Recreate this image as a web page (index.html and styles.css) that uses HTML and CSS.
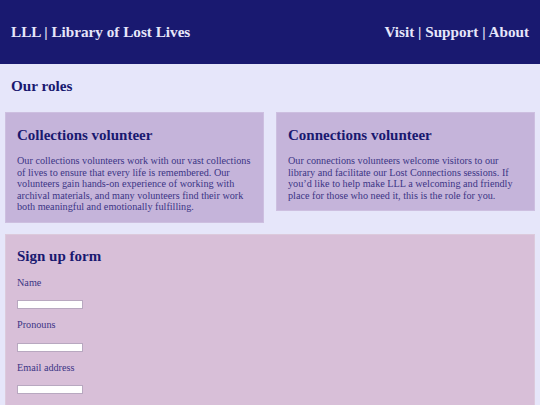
FILE: index.html
```html
<!DOCTYPE html>
<html lang="en">
<head>
<meta charset="utf-8">
<title>LLL | Volunteer</title>
<link rel="stylesheet" href="styles.css">
</head>
<body>
<header class="site-header">
  <div class="brand">LLL | Library of Lost Lives</div>
  <nav class="nav">Visit | Support | About</nav>
</header>
<main class="main">
  <h2 class="section-title">Our roles</h2>
  <div class="roles">
    <section class="card role">
      <h3 class="card-title">Collections volunteer</h3>
      <p class="card-text">Our collections volunteers work with our vast collections of lives to ensure that every life is remembered. Our volunteers gain hands-on experience of working with archival materials, and many volunteers find their work both meaningful and emotionally fulfilling.</p>
    </section>
    <section class="card role">
      <h3 class="card-title">Connections volunteer</h3>
      <p class="card-text">Our connections volunteers welcome visitors to our library and facilitate our Lost Connections sessions. If you’d like to help make LLL a welcoming and friendly place for those who need it, this is the role for you.</p>
    </section>
  </div>
  <section class="card form-card">
    <h3 class="card-title">Sign up form</h3>
    <form class="form">
      <div class="field">
        <label class="label" for="name">Name</label>
        <input class="input" id="name" type="text">
      </div>
      <div class="field">
        <label class="label" for="pronouns">Pronouns</label>
        <input class="input" id="pronouns" type="text">
      </div>
      <div class="field">
        <label class="label" for="email">Email address</label>
        <input class="input" id="email" type="email">
      </div>
    </form>
  </section>
</main>
</body>
</html>
```
FILE: styles.css
```css
* { box-sizing: border-box; }
html, body { margin: 0; padding: 0; }
body {
  background: #e6e6fa;
  color: #191970;
  font-family: "Liberation Serif", "Times New Roman", serif;
}
.site-header {
  height: 64px;
  background: #191970;
  color: #e6e6fa;
  display: flex;
  justify-content: space-between;
  align-items: center;
  padding: 0 11px;
  font-size: 15.2px;
  font-weight: bold;
}
.main {
  padding: 13px 5px 0;
}
.section-title {
  margin: 0 0 17px 6px;
  font-size: 15.2px;
  line-height: 18px;
}
.roles {
  display: flex;
  align-items: flex-start;
  gap: 12px;
}
.card {
  background: #c5b4da;
  border: 1px solid #cdbfe0;
  padding: 12px 11px 9px;
}
.role { flex: 1 1 0; }
.card-title {
  margin: 0 0 10px;
  font-size: 15px;
  line-height: 20px;
}
.card-text {
  margin: 0;
  font-size: 10.2px;
  line-height: 11.5px;
  color: #3b3585;
}
.form-card {
  margin-top: 11px;
  background: #d8bfd8;
  border-color: #dccadc;
  padding-top: 11px;
  padding-bottom: 20px;
}
.form { margin-top: 11px; }
.field { display: flex; flex-direction: column; align-items: flex-start; margin-bottom: 10px; }
.label {
  font-size: 10.2px;
  line-height: 11.5px;
  color: #3b3585;
}
.input {
  margin-top: 12px;
  width: 66px;
  height: 9px;
  padding: 0;
  border: 1px solid #b8a8c0;
  background: #fff;
}
```
